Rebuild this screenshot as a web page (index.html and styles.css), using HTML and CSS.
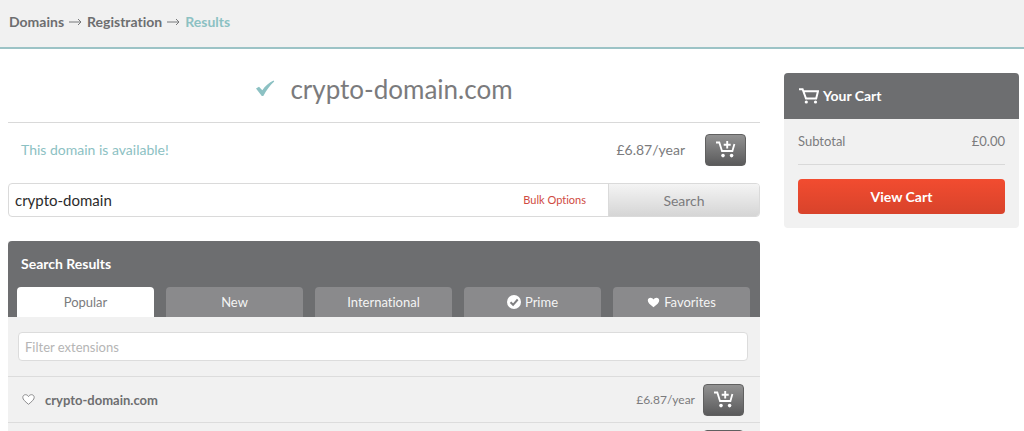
FILE: index.html
```
<!DOCTYPE html>
<html lang="en">
<head>
    <meta charset="UTF-8">
    <meta name="viewport" content="width=device-width, initial-scale=1.0">
    <title>Domain Registration Results</title>
    <link rel="stylesheet" href="styles.css">
</head>
<body>
    <!-- Icons used more than once -->
    <svg class="sprite" aria-hidden="true">
        <symbol id="cart-add" viewBox="0 0 20 17">
            <path d="M0 1.500h3.300l2.700 8.500h10.400l2-7" fill="none" stroke="currentColor" stroke-width="1.800"/>
            <path d="M11.200 0v7.500M7.700 3.700h7" fill="none" stroke="currentColor" stroke-width="1.900"/>
            <circle cx="7" cy="14.600" r="1.800" fill="currentColor"/>
            <circle cx="15.600" cy="14.600" r="1.800" fill="currentColor"/>
        </symbol>
        <symbol id="heart" viewBox="0 0 13 11">
            <path d="M6.5 10.3C3 7.3.8 5.6.8 3.4.8 1.8 2 .7 3.5.7c1.3 0 2.3.7 3 1.9.7-1.2 1.7-1.9 3-1.9 1.5 0 2.7 1.1 2.7 2.7 0 2.2-2.2 3.9-5.7 6.9z"/>
        </symbol>
    </svg>

    <header class="breadcrumb">
        <nav aria-label="Breadcrumb">
            <a href="#">Domains</a>
            <svg class="arrow" viewBox="0 0 13 8"><path d="M0 4h12M9 1l3 3-3 3"/></svg>
            <a href="#">Registration</a>
            <svg class="arrow" viewBox="0 0 13 8"><path d="M0 4h12M9 1l3 3-3 3"/></svg>
            <a href="#" class="current">Results</a>
        </nav>
    </header>

    <div class="page">
        <main>
            <h1 class="domain-title">
                <svg class="tick" viewBox="0 0 20 17"><path d="M1 8.600l3-1.800 3.300 3.400C10.500 6 14 2.600 18.600.6l.6.8C15 5.300 11.500 10 8.300 16H6.800z"/></svg>
                crypto-domain.com
            </h1>

            <!-- Availability -->
            <div class="availability">
                <span class="available">This domain is available!</span>
                <span class="price">£6.87/year</span>
                <button class="cart-btn" aria-label="Add to cart"><svg><use href="#cart-add"/></svg></button>
            </div>

            <!-- Search box -->
            <form class="search">
                <input type="text" value="crypto-domain" aria-label="Domain name">
                <a href="#">Bulk Options</a>
                <button type="button">Search</button>
            </form>

            <!-- Search results -->
            <section class="results">
                <div class="results-head">
                    <h2>Search Results</h2>
                    <div class="tabs">
                        <button class="tab active">Popular</button>
                        <button class="tab">New</button>
                        <button class="tab">International</button>
                        <button class="tab">
                            <svg class="prime-icon" viewBox="0 0 14 14"><circle cx="7" cy="7" r="7" fill="#fff"/><path d="M3.500 7.200l2.600 2.600 4.600-5.300" fill="none" stroke="#808082" stroke-width="2"/></svg>
                            Prime
                        </button>
                        <button class="tab">
                            <svg class="heart-icon"><use href="#heart"/></svg>
                            Favorites
                        </button>
                    </div>
                </div>
                <div class="filter">
                    <input type="text" placeholder="Filter extensions" aria-label="Filter extensions">
                </div>
                <div class="result-row">
                    <button class="fav-btn" aria-label="Add to favorites"><svg><use href="#heart"/></svg></button>
                    <span class="name">crypto-domain.com</span>
                    <span class="price">£6.87/year</span>
                    <button class="cart-btn" aria-label="Add to cart"><svg><use href="#cart-add"/></svg></button>
                </div>
                <div class="result-row">
                    <button class="cart-btn" aria-label="Add to cart"><svg><use href="#cart-add"/></svg></button>
                </div>
            </section>
        </main>

        <!-- Cart -->
        <aside class="cart">
            <h2>
                <svg class="cart-icon" viewBox="0 0 20 16"><path d="M0 1.200h3.600l3.400 9.300h10.200L19 3.200H4.500"/><circle cx="7.300" cy="14" r="1.600"/><circle cx="16.500" cy="14" r="1.600"/></svg>
                Your Cart
            </h2>
            <div class="cart-body">
                <div class="subtotal"><span>Subtotal</span><span>£0.00</span></div>
                <button class="view-cart">View Cart</button>
            </div>
        </aside>
    </div>
</body>
</html>
```
FILE: styles.css
```
/* Global Styles */
* {
    box-sizing: border-box;
}

body {
    font-family: 'Lato', 'Liberation Sans', sans-serif;
    font-size: 13px;
    line-height: 20px;
    font-variant-ligatures: none;
    color: #6d6e70;
    background: #fff;
    margin: 0;
    height: 100vh;
    overflow: hidden;
}

h1, h2 {
    margin: 0;
}

button, input {
    font-family: inherit;
    font-size: inherit;
    font-variant-ligatures: inherit;
    margin: 0;
}

button {
    cursor: pointer;
    padding: 0;
    border: none;
}

.sprite {
    display: none;
}

/* Breadcrumb */
.breadcrumb {
    background: #f1f1f1;
    border-bottom: 2px solid #9cc3c6;
    padding: 12px 9px 15px;
}

.breadcrumb nav {
    display: flex;
    align-items: center;
    gap: 5px;
    font-size: 14px;
}

.breadcrumb a {
    color: #6d6e70;
    font-weight: bold;
    text-decoration: none;
}

.breadcrumb .current {
    color: #8cc1c3;
}

.arrow {
    width: 13px;
    height: 8px;
    fill: none;
    stroke: #77787a;
}

/* Columns */
.page {
    display: grid;
    grid-template-columns: 1fr 235px;
    gap: 24px;
    align-items: start;
    padding: 24px 5px 0 8px;
}

.domain-title {
    display: flex;
    justify-content: center;
    align-items: center;
    gap: 15px;
    height: 50px;
    padding-bottom: 18px;
    border-bottom: 1px solid #d9d9d9;
    font-size: 26px;
    font-weight: normal;
    color: #7b7b7d;
}

.tick {
    width: 20px;
    height: 17px;
    fill: #8cc1c3;
}

.availability {
    display: flex;
    align-items: center;
    height: 53px;
    padding: 0 14px 0 13px;
    font-size: 14px;
}

.available {
    color: #8cc1c3;
}

.price {
    margin-left: auto;
    color: #7b7b7d;
}

.cart-btn {
    display: flex;
    justify-content: center;
    align-items: center;
    width: 41px;
    height: 32px;
    margin-left: 20px;
    color: #fff;
    background: linear-gradient(#929292, #5a5a5b);
    border: 1px solid #606060;
    border-radius: 4px;
}

.cart-btn svg {
    width: 20px;
    height: 17px;
}

/* Search box */
.search {
    display: flex;
    align-items: center;
    height: 34px;
    margin: 7px 0 24px;
    border: 1px solid #dadada;
    border-radius: 4px;
    overflow: hidden;
}

.search input {
    flex: 1;
    min-width: 0;
    padding: 0 6px;
    border: none;
    font-size: 15px;
    color: #2b2b2b;
}

.search a {
    margin-right: 22px;
    font-size: 11px;
    color: #cf4a42;
    text-decoration: none;
}

.search button {
    width: 151px;
    align-self: stretch;
    border-left: 1px solid #dadada;
    background: linear-gradient(#f4f4f4, #d5d5d5);
    color: #7b7b7d;
    font-size: 14px;
}

/* Results */
.results {
    background: #f1f1f1;
}

.results-head {
    padding: 13px 10px 0 9px;
    background: #6d6e70;
    border-radius: 4px 4px 0 0;
}

.results h2 {
    padding-left: 4px;
    margin-bottom: 13px;
    font-size: 14px;
    color: #fff;
}

.tabs {
    display: flex;
    gap: 12px;
}

.tab {
    display: flex;
    flex: 1;
    justify-content: center;
    align-items: center;
    gap: 4px;
    height: 30px;
    background: #8a8a8c;
    border-radius: 4px 4px 0 0;
    color: #f4f4f4;
}

.tab.active {
    background: #fff;
    color: #7b7b7d;
}

.prime-icon {
    width: 14px;
    height: 14px;
}

.heart-icon {
    width: 13px;
    height: 11px;
    fill: #fff;
}

.filter {
    padding: 15px 12px 15px 10px;
}

.filter input {
    display: block;
    width: 100%;
    height: 29px;
    padding: 0 6px;
    border: 1px solid #dcdcdc;
    border-radius: 4px;
}

.filter input::placeholder {
    color: #b5b5b5;
}

.result-row {
    display: flex;
    align-items: center;
    height: 46px;
    padding: 0 16px 0 14px;
    border-top: 1px solid #dcdcdc;
}

.result-row .name {
    margin-left: 10px;
    font-weight: bold;
}

.result-row .price {
    font-size: 12px;
}

.result-row .cart-btn {
    margin-left: 8px;
}

.result-row .cart-btn:only-child {
    margin-left: auto;
}

.fav-btn {
    display: flex;
    background: none;
}

.fav-btn svg {
    width: 13px;
    height: 11px;
    fill: #fff;
    stroke: #8a8a8c;
}

/* Cart */
.cart {
    background: #f1f1f1;
    border-radius: 4px;
    overflow: hidden;
}

.cart h2 {
    display: flex;
    align-items: center;
    gap: 4px;
    height: 46px;
    padding: 0 15px;
    background: #6d6e70;
    color: #fff;
    font-size: 14px;
}

.cart-icon {
    width: 20px;
    height: 16px;
    fill: none;
    stroke: #fff;
    stroke-width: 2;
}

.cart-icon circle {
    fill: #fff;
    stroke: none;
}

.cart-body {
    padding: 12px 14px 14px;
}

.subtotal {
    display: flex;
    justify-content: space-between;
    padding-bottom: 13px;
    margin-bottom: 14px;
    border-bottom: 1px solid #d9d9d9;
    color: #7b7b7d;
}

.view-cart {
    width: 100%;
    height: 35px;
    background: linear-gradient(#f24c30, #d8432b);
    border-radius: 4px;
    color: #fff;
    font-size: 14px;
    font-weight: bold;
}
```
